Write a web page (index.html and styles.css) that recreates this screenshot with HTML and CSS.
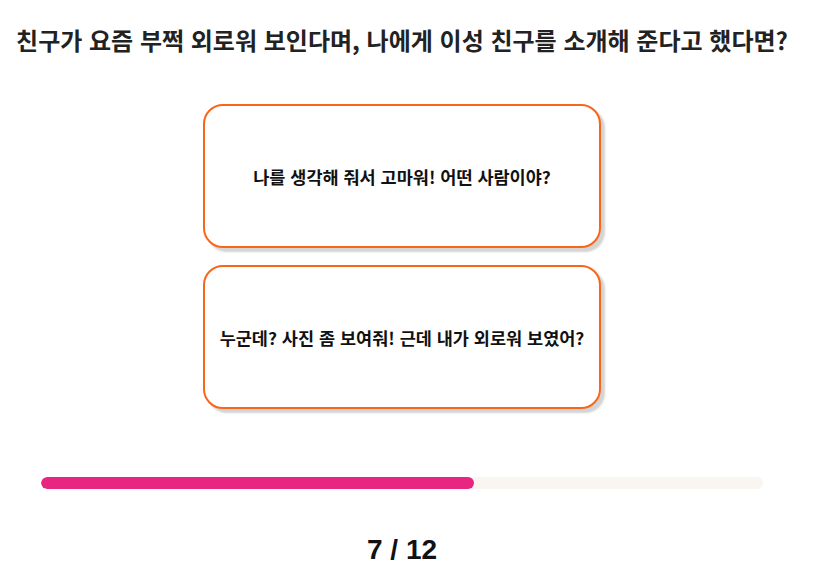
FILE: index.html
```html
<!DOCTYPE html>
<html lang="ko">
<head>
    <meta charset="UTF-8">
    <meta name="viewport" content="width=device-width, initial-scale=1.0">
    <title>Quiz</title>
    <link rel="stylesheet" href="styles.css">
</head>
<body>
    <div class="app">
        <h1 class="question">친구가 요즘 부쩍 외로워 보인다며, 나에게 이성 친구를 소개해 준다고 했다면?</h1>

        <div class="answers">
            <button class="answer">나를 생각해 줘서 고마워! 어떤 사람이야?</button>
            <button class="answer">누군데? 사진 좀 보여줘! 근데 내가 외로워 보였어?</button>
        </div>

        <div class="progress">
            <div class="progress-fill" style="width: 60%;"></div>
        </div>

        <div class="counter">7 / 12</div>
    </div>
</body>
</html>
```

FILE: styles.css
```css
body {
    margin: 0;
    padding: 0;
    background-color: #fff;
    font-family: "Noto Sans CJK KR", "Noto Sans", sans-serif;
    color: #222;
}
.app {
    width: 804px;
    display: flex;
    flex-direction: column;
    align-items: center;
}
.question {
    margin: 24px 0 0;
    font-size: 24px;
    line-height: 32px;
    font-weight: 700;
    color: #222;
    text-align: center;
    white-space: nowrap;
}
.answers {
    display: flex;
    flex-direction: column;
    gap: 17px;
    margin-top: 48px;
}
.answer {
    width: 398px;
    height: 144px;
    box-sizing: border-box;
    background-color: #fff;
    border: 2px solid #f9661a;
    border-radius: 20px;
    box-shadow: 4px 4px 2px #d4d4d4;
    font-family: inherit;
    font-size: 17.5px;
    font-weight: 700;
    color: #111;
    cursor: pointer;
}
.progress {
    width: 722px;
    height: 12px;
    margin-top: 68px;
    background-color: #f9f6f2;
    border-radius: 6px;
    overflow: hidden;
}
.progress-fill {
    height: 100%;
    background-color: #e82681;
    border-radius: 6px;
}
.counter {
    margin-top: 44px;
    font-family: "Liberation Sans", Arial, sans-serif;
    font-size: 28px;
    line-height: 34px;
    font-weight: 700;
    color: #111;
}
```
